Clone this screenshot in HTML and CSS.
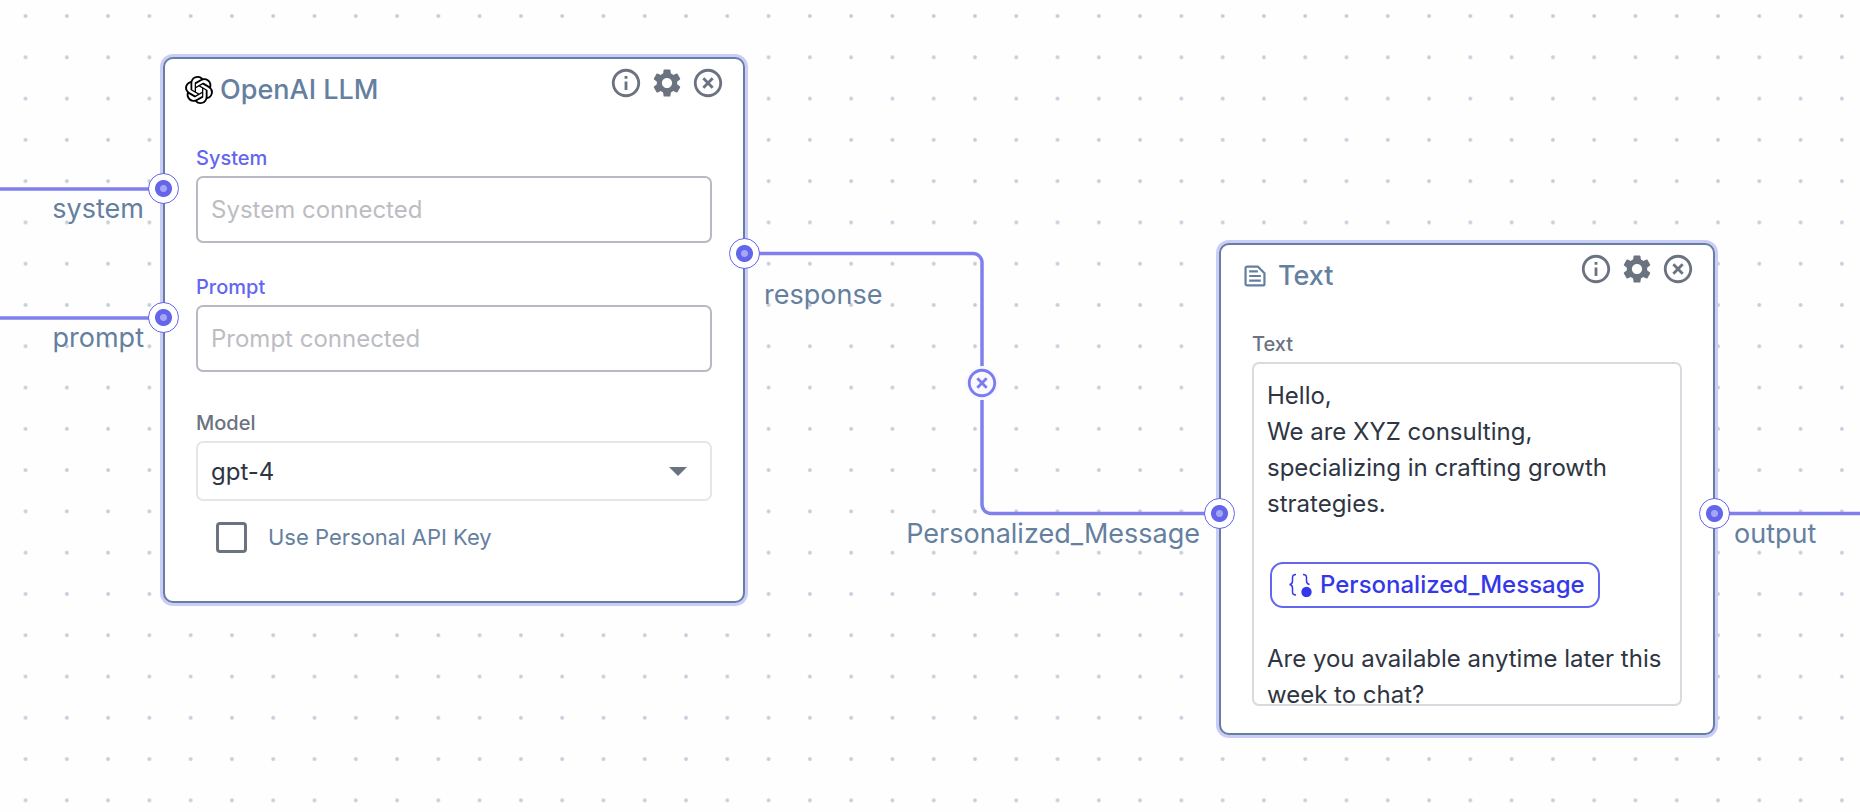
FILE: index.html
```html
<!DOCTYPE html>
<html lang="en">
<head>
<meta charset="utf-8">
<title>Workflow canvas</title>
<link rel="stylesheet" href="styles.css">
</head>
<body>
<svg class="symbols" aria-hidden="true">
  <symbol id="icon-info" viewBox="0 0 24 24"><path d="M11 7h2v2h-2zm0 4h2v6h-2zm1-9C6.48 2 2 6.48 2 12s4.480 10 10 10 10-4.480 10-10S17.520 2 12 2zm0 18c-4.410 0-8-3.590-8-8s3.590-8 8-8 8 3.590 8 8-3.590 8-8 8z"/></symbol>
  <symbol id="icon-gear" viewBox="0 0 24 24"><path d="M19.14 12.94c.04-.3.06-.61.06-.94 0-.32-.02-.64-.07-.94l2.03-1.58c.18-.14.23-.41.12-.61l-1.92-3.32c-.12-.22-.37-.29-.59-.22l-2.39.96c-.5-.38-1.03-.7-1.62-.94l-.36-2.54c-.04-.24-.24-.41-.48-.41h-3.840c-.24 0-.43.17-.47.41l-.36 2.54c-.59.24-1.13.57-1.62.94l-2.39-.96c-.22-.08-.47 0-.59.22L2.74 8.87c-.12.21-.08.47.12.61l2.03 1.58c-.05.3-.09.63-.09.94s.02.64.07.94l-2.03 1.58c-.18.14-.23.41-.12.61l1.92 3.32c.12.22.37.29.59.22l2.39-.96c.5.38 1.03.7 1.62.94l.36 2.54c.05.24.24.41.48.41h3.840c.24 0 .44-.17.47-.41l.36-2.54c.59-.24 1.13-.56 1.62-.94l2.39.96c.22.08.47 0 .59-.22l1.92-3.32c.12-.22.07-.47-.12-.61l-2.010-1.580zM12 15.600c-1.980 0-3.600-1.620-3.600-3.600s1.620-3.600 3.600-3.600 3.600 1.620 3.600 3.600-1.620 3.600-3.600 3.600z"/></symbol>
  <symbol id="icon-close" viewBox="0 0 24 24"><path d="M14.59 8L12 10.59 9.41 8 8 9.41 10.59 12 8 14.59 9.41 16 12 13.41 14.59 16 16 14.59 13.41 12 16 9.41 14.59 8zM12 2C6.47 2 2 6.47 2 12s4.470 10 10 10 10-4.470 10-10S17.530 2 12 2zm0 18c-4.410 0-8-3.590-8-8s3.590-8 8-8 8 3.590 8 8-3.590 8-8 8z"/></symbol>
</svg>

<main class="canvas">
  <svg class="layer" aria-hidden="true">
    <defs>
      <pattern id="dots" x="4.900" y="-4.600" width="41.280" height="41.280" patternUnits="userSpaceOnUse">
        <circle cx="20.640" cy="20.640" r="1.900" fill="#c3cddb"/>
      </pattern>
    </defs>
    <rect width="100%" height="100%" fill="url(#dots)"/>
    <g class="edges">
      <path d="M0 189H163"/>
      <path d="M0 318H163"/>
      <path d="M745 253.500H973a9 9 0 0 1 9 9V504.500a9 9 0 0 0 9 9H1219"/>
      <path d="M1715 513.500H4000"/>
    </g>
  </svg>

  <button class="edge-remove" type="button" aria-label="Remove connection"><svg><use href="#icon-close"/></svg></button>

  <section class="node node-llm">
    <header class="node-header">
      <h2 class="node-title">
        <svg class="logo" viewBox="0 0 24 24"><path d="M22.2819 9.8211a5.9847 5.9847 0 0 0-.5157-4.9108 6.0462 6.0462 0 0 0-6.5098-2.9A6.0651 6.0651 0 0 0 4.9807 4.1818a5.9847 5.9847 0 0 0-3.9977 2.9 6.0462 6.0462 0 0 0 .7427 7.0966 5.98 5.98 0 0 0 .511 4.9107 6.051 6.051 0 0 0 6.5146 2.9001A5.9847 5.9847 0 0 0 13.2599 24a6.0557 6.0557 0 0 0 5.7718-4.2058 5.9894 5.9894 0 0 0 3.9977-2.9001 6.0557 6.0557 0 0 0-.7475-7.0729zm-9.022 12.6081a4.4755 4.4755 0 0 1-2.8764-1.0408l.1419-.0804 4.7783-2.7582a.7948.7948 0 0 0 .3927-.6813v-6.7369l2.02 1.1686a.071.071 0 0 1 .038.052v5.5826a4.504 4.504 0 0 1-4.4945 4.4944zm-9.6607-4.1254a4.4708 4.4708 0 0 1-.5346-3.0137l.142.0852 4.783 2.7582a.7712.7712 0 0 0 .7806 0l5.8428-3.3685v2.3324a.0804.0804 0 0 1-.0332.0615L9.74 19.9502a4.4992 4.4992 0 0 1-6.1408-1.6464zM2.3408 7.8956a4.485 4.485 0 0 1 2.3655-1.9728V11.6a.7664.7664 0 0 0 .3879.6765l5.8144 3.3543-2.0201 1.1685a.0757.0757 0 0 1-.071 0l-4.8303-2.7865A4.504 4.504 0 0 1 2.3408 7.872zm16.5963 3.8558L13.1038 8.364 15.1192 7.2a.0757.0757 0 0 1 .071 0l4.8303 2.7913a4.4944 4.4944 0 0 1-.6765 8.1042v-5.6772a.79.79 0 0 0-.407-.667zm2.0107-3.0231l-.142-.0852-4.7735-2.7818a.7759.7759 0 0 0-.7854 0L9.409 9.2297V6.8974a.0662.0662 0 0 1 .0284-.0615l4.8303-2.7866a4.4992 4.4992 0 0 1 6.6802 4.66zM8.3065 12.863l-2.02-1.1638a.0804.0804 0 0 1-.038-.0567V6.0742a4.4992 4.4992 0 0 1 7.3757-3.4537l-.142.0805L8.704 5.459a.7948.7948 0 0 0-.3927.6813zm1.0976-2.3654l2.602-1.4998 2.6069 1.4998v2.9994l-2.5974 1.4997-2.6067-1.4997Z"/></svg>
        OpenAI LLM
      </h2>
      <div class="node-actions">
        <button type="button" aria-label="Info"><svg><use href="#icon-info"/></svg></button>
        <button type="button" aria-label="Settings"><svg><use href="#icon-gear"/></svg></button>
        <button type="button" aria-label="Close"><svg><use href="#icon-close"/></svg></button>
      </div>
    </header>
    <div class="node-body">
      <div class="field">
        <label class="label label-linked" for="system">System</label>
        <input class="box text-input" id="system" type="text" placeholder="System connected">
      </div>
      <div class="field">
        <label class="label label-linked" for="prompt">Prompt</label>
        <input class="box text-input" id="prompt" type="text" placeholder="Prompt connected">
      </div>
      <div class="field field-model">
        <label class="label" for="model">Model</label>
        <div class="select-wrap">
          <select class="box select" id="model"><option>gpt-4</option></select>
          <svg class="caret" viewBox="0 0 18 9"><path d="M0 0h18l-9 9z"/></svg>
        </div>
      </div>
      <label class="check"><input type="checkbox">Use Personal API Key</label>
    </div>
    <div class="port port-left port-system"><span class="port-label">system</span></div>
    <div class="port port-left port-prompt"><span class="port-label">prompt</span></div>
    <div class="port port-right port-response"><span class="port-label">response</span></div>
  </section>

  <section class="node node-text">
    <header class="node-header">
      <h2 class="node-title title-text">
        <svg class="doc" viewBox="0 0 24 24" fill="none" stroke="currentColor" stroke-width="1.900"><path d="M14.400 3.900H5.200A1.300 1.300 0 0 0 3.900 5.200v13.600a1.300 1.300 0 0 0 1.300 1.300h13.600a1.300 1.300 0 0 0 1.300-1.300V9.600zM7 8h7.500M7 12h10M7 16h10"/></svg>
        Text
      </h2>
      <div class="node-actions">
        <button type="button" aria-label="Info"><svg><use href="#icon-info"/></svg></button>
        <button type="button" aria-label="Settings"><svg><use href="#icon-gear"/></svg></button>
        <button type="button" aria-label="Close"><svg><use href="#icon-close"/></svg></button>
      </div>
    </header>
    <div class="node-body">
      <div class="field">
        <span class="label" id="text-label">Text</span>
        <div class="box editor" role="textbox" aria-multiline="true" aria-labelledby="text-label" contenteditable="true" spellcheck="false">
          <p>Hello,</p>
          <p>We are XYZ consulting, specializing in crafting growth strategies.</p>
          <p class="variable-line"><span class="variable" contenteditable="false"><svg viewBox="0 0 24 24"><path d="M8 1.500C5.500 1.500 4.500 2.500 4.500 4.500v3.500c0 2-1 3.200-3 3.500 2 .3 3 1.500 3 3.500v4c0 2 1 3 3.500 3M15 1.500c2.500 0 3.500 1 3.500 3v3.500c0 2 1 3 3 3.500" fill="none" stroke="currentColor" stroke-width="1.500"/><circle cx="18.500" cy="19" r="5.200" fill="currentColor"/></svg>Personalized_Message</span></p>
          <p>Are you available anytime later this week to chat?</p>
        </div>
      </div>
    </div>
    <div class="port port-left port-variable"><span class="port-label">Personalized_Message</span></div>
    <div class="port port-right port-output"><span class="port-label">output</span></div>
  </section>
</main>
</body>
</html>
```
FILE: styles.css
```css
* { box-sizing: border-box; }

body {
  margin: 0;
  background: #fefefe;
  font-family: Inter, "Liberation Sans", sans-serif;
  color: #2e3543;
}

h2, p { margin: 0; }

button {
  padding: 0;
  border: 0;
  background: none;
  color: inherit;
  cursor: pointer;
}

button svg, .logo, .doc, .variable svg { display: block; flex: none; }

.symbols { display: none; }

.canvas {
  position: relative;
  min-height: 100vh;
  overflow: hidden;
}

.layer {
  position: absolute;
  inset: 0;
  width: 100%;
  height: 100%;
}

.edges {
  fill: none;
  stroke: #7f80ee;
  stroke-width: 3.5px;
}

.edge-remove {
  position: absolute;
  left: 965px;
  top: 366px;
  border-radius: 50%;
  background: #f9f9ff;
  color: #7b7cf0;
}

.edge-remove svg, .node-actions svg {
  width: 34px;
  height: 34px;
  fill: currentColor;
}

.node {
  position: absolute;
  border: 2px solid #65809f;
  border-radius: 10px;
  background: #fff;
  box-shadow: 0 0 0 3px #cbccf8;
}

.node-llm { left: 163px; top: 57px; width: 582px; }
.node-text { left: 1219px; top: 243px; width: 496px; }

.node-header {
  display: flex;
  justify-content: space-between;
  align-items: flex-start;
  padding: 7px 18px 0 20px;
}

.node-title {
  display: flex;
  align-items: center;
  gap: 7px;
  padding-top: 7px;
  font-size: 27px;
  font-weight: 500;
  line-height: 34px;
  color: #65809f;
}

.title-text { gap: 9px; }

.logo { width: 28px; height: 28px; fill: #000; }
.doc { width: 28px; height: 28px; }

.node-actions {
  display: flex;
  gap: 7px;
  color: #6b7280;
}

.node-body {
  display: flex;
  flex-direction: column;
  gap: 32px;
  padding: 39px 31px 27px;
}

.node-llm .node-body { padding-bottom: 48px; }

.field {
  display: flex;
  flex-direction: column;
  gap: 6px;
}

.field-model { padding-top: 7px; }

.label {
  font-size: 20px;
  font-weight: 500;
  line-height: 24px;
  color: #6b7280;
}

.label-linked { color: #6366f1; }

.box {
  width: 100%;
  border: 2px solid #d9dadf;
  border-radius: 7px;
  background: #fff;
  font-family: inherit;
  font-size: 24px;
  color: #2e3543;
}

.text-input {
  height: 67px;
  padding: 0 13px;
  border-color: #b9b9c4;
}

.text-input::placeholder { color: #bcbdc3; opacity: 1; }

.select-wrap {
  display: grid;
  align-items: center;
}

.select-wrap > * { grid-area: 1 / 1; }

.select {
  height: 60px;
  padding: 0 13px;
  border-color: #e5e6eb;
  appearance: none;
}

.caret {
  justify-self: end;
  width: 18px;
  height: 9px;
  margin-right: 25px;
  fill: #6b7280;
  pointer-events: none;
}

.check {
  display: flex;
  align-items: center;
  gap: 21px;
  margin: -11px 0 0 20px;
  font-size: 22px;
  line-height: 31px;
  color: #65809f;
}

.check input {
  width: 31px;
  height: 31px;
  margin: 0;
  border: 3px solid #6b7280;
  border-radius: 4px;
  appearance: none;
}

.editor {
  height: 344px;
  padding: 14px 13px 0;
  overflow: hidden;
  line-height: 36px;
}

.variable-line {
  display: flex;
  padding: 40px 3px 33px;
}

.variable {
  display: flex;
  align-items: center;
  gap: 8px;
  height: 46px;
  padding: 0 13px 0 16px;
  border: 2px solid #6366f1;
  border-radius: 13px;
  font-weight: 500;
  color: #3538e8;
}

.variable svg { width: 24px; height: 24px; }

.port {
  position: absolute;
  width: 31px;
  height: 31px;
  border: 1px solid #6366f1;
  border-radius: 50%;
  background: radial-gradient(circle, #a5a7f5 3px, #6366ea 4px, #6366ea 8px, #fff 9px);
}

.port-left { left: -17px; }
.port-right { right: -17px; }

.port-system { top: 114px; }
.port-prompt { top: 243px; }
.port-response { top: 179px; }
.port-variable, .port-output { top: 253px; }

.port-label {
  position: absolute;
  top: 18px;
  font-size: 27px;
  line-height: 34px;
  color: #65809f;
}

.port-left .port-label { right: 34px; }
.port-right .port-label { left: 34px; }
.port-response .port-label { top: 39px; }
```
